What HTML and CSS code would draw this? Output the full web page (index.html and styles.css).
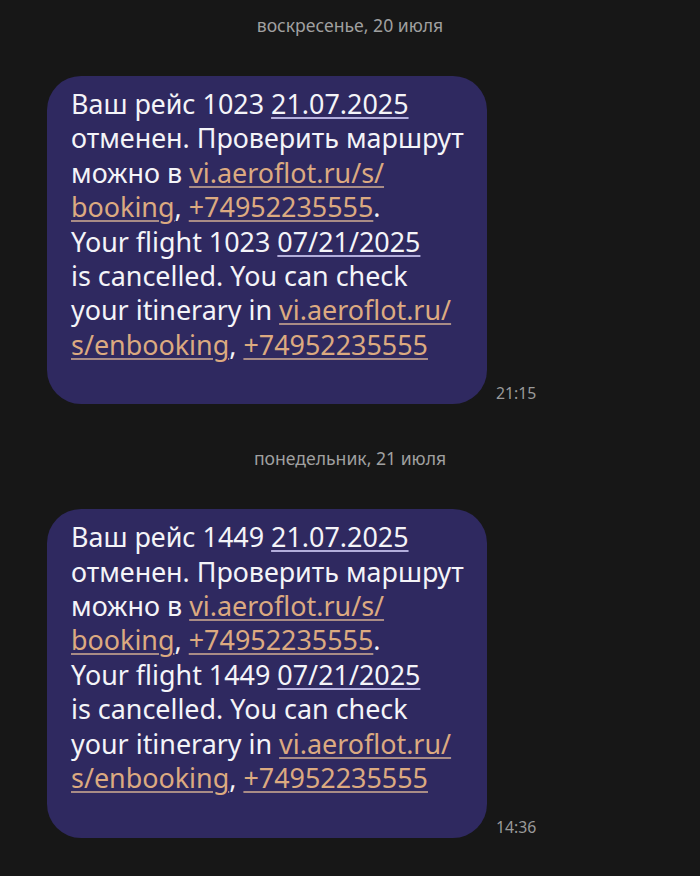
FILE: index.html
```html
<!DOCTYPE html>
<html lang="ru">
<head>
<meta charset="utf-8">
<link rel="stylesheet" href="styles.css">
</head>
<body>
<div class="chat">
  <div class="day">воскресенье, 20 июля</div>
  <div class="row">
    <div class="bubble">Ваш рейс 1023 <span class="u">21.07.2025</span><br>отменен. Проверить маршрут<br>можно в <span class="link">vi.aeroflot.ru/s/<br>booking</span>, <span class="link">+74952235555</span>.<br>Your flight 1023 <span class="u">07/21/2025</span><br>is cancelled. You can check<br>your itinerary in <span class="link">vi.aeroflot.ru/<br>s/enbooking</span>, <span class="link">+74952235555</span></div>
    <div class="time">21:15</div>
  </div>
  <div class="day">понедельник, 21 июля</div>
  <div class="row">
    <div class="bubble">Ваш рейс 1449 <span class="u">21.07.2025</span><br>отменен. Проверить маршрут<br>можно в <span class="link">vi.aeroflot.ru/s/<br>booking</span>, <span class="link">+74952235555</span>.<br>Your flight 1449 <span class="u">07/21/2025</span><br>is cancelled. You can check<br>your itinerary in <span class="link">vi.aeroflot.ru/<br>s/enbooking</span>, <span class="link">+74952235555</span></div>
    <div class="time">14:36</div>
  </div>
</div>
</body>
</html>
```
FILE: styles.css
```css
html, body {
  margin: 0;
  padding: 0;
  background: #171717;
}
body {
  font-family: "Noto Sans", sans-serif;
  width: 700px;
  height: 876px;
  overflow: hidden;
}
.chat {
  display: flex;
  flex-direction: column;
  padding-top: 13px;
}
.day {
  text-align: center;
  color: #a0a0a0;
  font-size: 17.6px;
  line-height: 24px;
}
.row {
  display: flex;
  align-items: flex-end;
  gap: 9px;
  margin: 39px 0 42px 47px;
}
.bubble {
  width: 392px;
  background: #2f2960;
  color: #f4f4f8;
  font-size: 26.9px;
  line-height: 34.4px;
  padding: 11px 24px 42px 24px;
  border-radius: 34px;
  white-space: nowrap;
}
.u {
  text-decoration: underline;
  text-decoration-color: #b3aedc;
  text-underline-offset: 3px;
  text-decoration-thickness: 1.5px;
}
.link {
  color: #dcaa80;
  text-decoration: underline;
  text-decoration-color: #a98c86;
  text-underline-offset: 3px;
  text-decoration-thickness: 1.5px;
}
.time {
  color: #9a9a9a;
  font-size: 15.8px;
  line-height: 20px;
  padding-bottom: 1px;
}
```
